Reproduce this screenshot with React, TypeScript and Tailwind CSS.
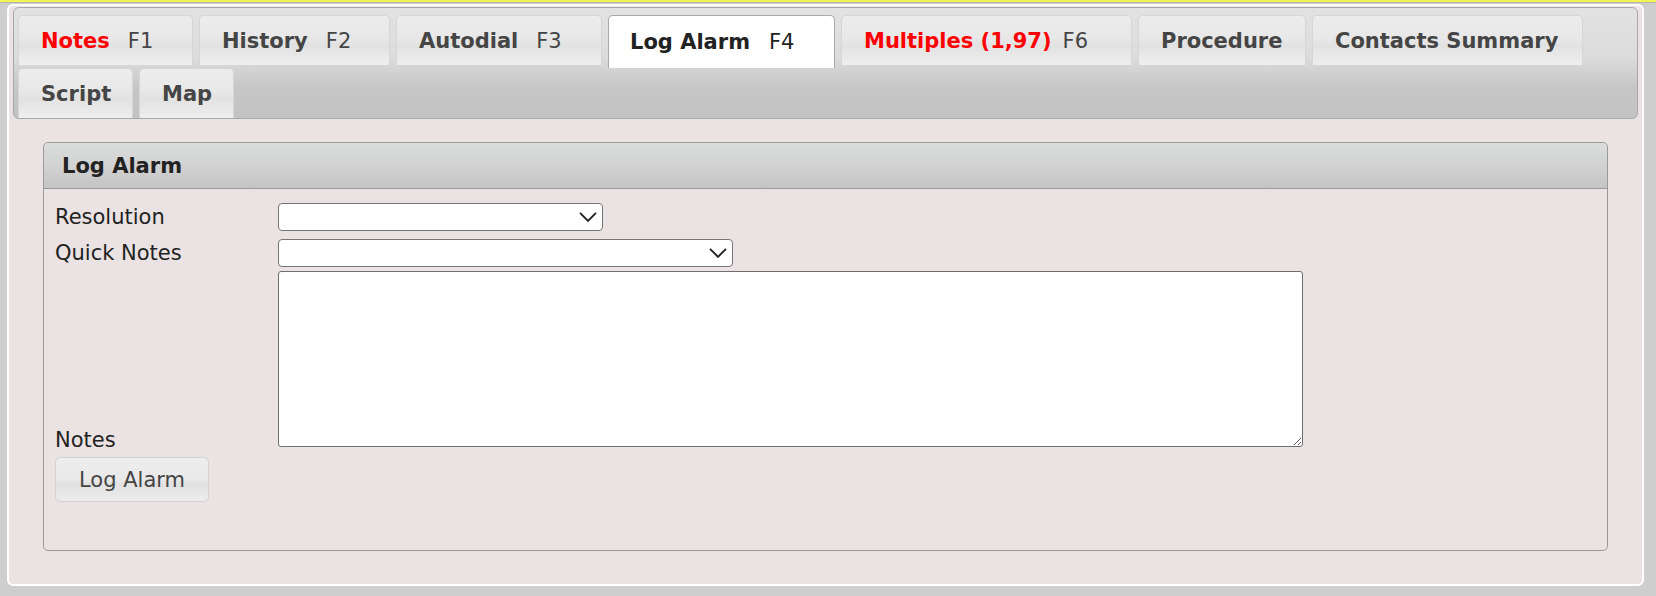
import React from "react";

type Tab = {
  label: string;
  fkey?: string;
  width: string;
  alert?: boolean;
  keyGap?: string;
  active?: boolean;
};

const tabs: Tab[] = [
  { label: "Notes", fkey: "F1", width: "w-[175px]", alert: true },
  { label: "History", fkey: "F2", width: "w-[191px]" },
  { label: "Autodial", fkey: "F3", width: "w-[206px]" },
  { label: "Log Alarm", fkey: "F4", width: "w-[227px]", active: true },
  { label: "Multiples (1,97)", fkey: "F6", width: "w-[291px]", alert: true, keyGap: "ml-[11px]" },
  { label: "Procedure", width: "w-[168px]" },
  { label: "Contacts Summary", width: "w-[271px]" },
  { label: "Script", width: "w-[115px]" },
  { label: "Map", width: "w-[95px]" },
];

const Chevron = () => (
  <svg
    className="pointer-events-none absolute right-[6px] top-1/2 -translate-y-1/2"
    width="18"
    height="11"
    viewBox="0 0 18 11"
    fill="none"
  >
    <path d="M1 1.3 L9 9.3 L17 1.3" stroke="#222" strokeWidth="1.9" />
  </svg>
);

const Select: React.FC<{ width: string }> = ({ width }) => (
  <div className={`relative ${width} h-[28px]`}>
    <select className="h-full w-full appearance-none rounded-[4px] border border-[#767676] bg-white" />
    <Chevron />
  </div>
);

const TabButton: React.FC<{ tab: Tab }> = ({ tab }) => {
  if (tab.active) {
    return (
      <div
        className={`${tab.width} mb-[-3px] flex h-[53px] items-center self-start rounded-t-[5px] border border-b-0 border-[#aaaaaa] bg-white pl-[21px] text-[#222]`}
      >
        <span className="font-bold">{tab.label}</span>
        <span className="ml-[19px]">{tab.fkey}</span>
      </div>
    );
  }
  return (
    <div
      className={`${tab.width} flex h-[50px] items-center rounded-t-[5px] border border-b-0 border-[#d6d6d6] bg-[linear-gradient(to_bottom,#ececec_0%,#e8e8e8_45%,#e2e2e2_60%,#eeeeee_100%)] pl-[22px] text-[#454545]`}
    >
      <span className={`font-bold ${tab.alert ? "text-[#ff0000]" : ""}`}>
        {tab.label}
      </span>
      {tab.fkey && (
        <span className={tab.keyGap ?? "ml-[18px]"}>{tab.fkey}</span>
      )}
    </div>
  );
};

export default function App() {
  return (
    <div className="h-[596px] w-[1656px] overflow-hidden bg-[#cecece] font-['DejaVu_Sans',sans-serif] text-[21px] leading-[24px] text-[#222]">
      <div className="h-[2px] bg-[#f4f45a]" />
      <div className="h-[1px] bg-[#b4b4a0]" />

      {/* tabs widget */}
      <div className="ml-[7px] mt-[1px] w-[1637px] rounded-[6px] border-2 border-white bg-[#ebe3e3] px-[4px] pt-[1px]">
        <div className="flex h-[112px] flex-wrap content-start gap-x-[6px] gap-y-[3px] rounded-[6px] border border-[#a8a8a8] bg-[linear-gradient(to_bottom,#e2e2e2_0%,#dcdcdc_45%,#c6c6c6_72%,#c3c3c3_100%)] pl-[4px] pt-[7px]">
          {tabs.map((t) => (
            <TabButton key={t.label} tab={t} />
          ))}
        </div>

        <div className="px-[30px] pb-[33px] pt-[23px]">
          <div className="h-[409px] rounded-[5px] border border-[#9a9a9a]">
            <div className="flex h-[46px] items-center rounded-t-[5px] border-b border-[#9a9a9a] bg-[linear-gradient(to_bottom,#dadcdc_0%,#d2d2d2_50%,#c4c4c4_100%)] pl-[18px] font-bold">
              Log Alarm
            </div>

            <div className="pl-[11px] pt-[14px]">
              <div className="flex items-center">
                <div className="w-[223px]">Resolution</div>
                <Select width="w-[325px]" />
              </div>
              <div className="mt-[8px] flex items-center">
                <div className="w-[223px]">Quick Notes</div>
                <Select width="w-[455px]" />
              </div>
              <div className="mt-[4px] flex items-end">
                <div className="mb-[-5px] w-[223px]">Notes</div>
                <textarea className="block h-[176px] w-[1025px] rounded-[3px] border border-[#6f6f6f] bg-white" />
              </div>
              <button className="mt-[10px] h-[45px] w-[154px] rounded-[5px] border border-[#d3d3d3] bg-[linear-gradient(to_bottom,#eeeeee_0%,#e9e9e9_50%,#e1e1e1_60%,#ececec_100%)] text-[#444]">
                Log Alarm
              </button>
            </div>
          </div>
        </div>
      </div>
    </div>
  );
}
